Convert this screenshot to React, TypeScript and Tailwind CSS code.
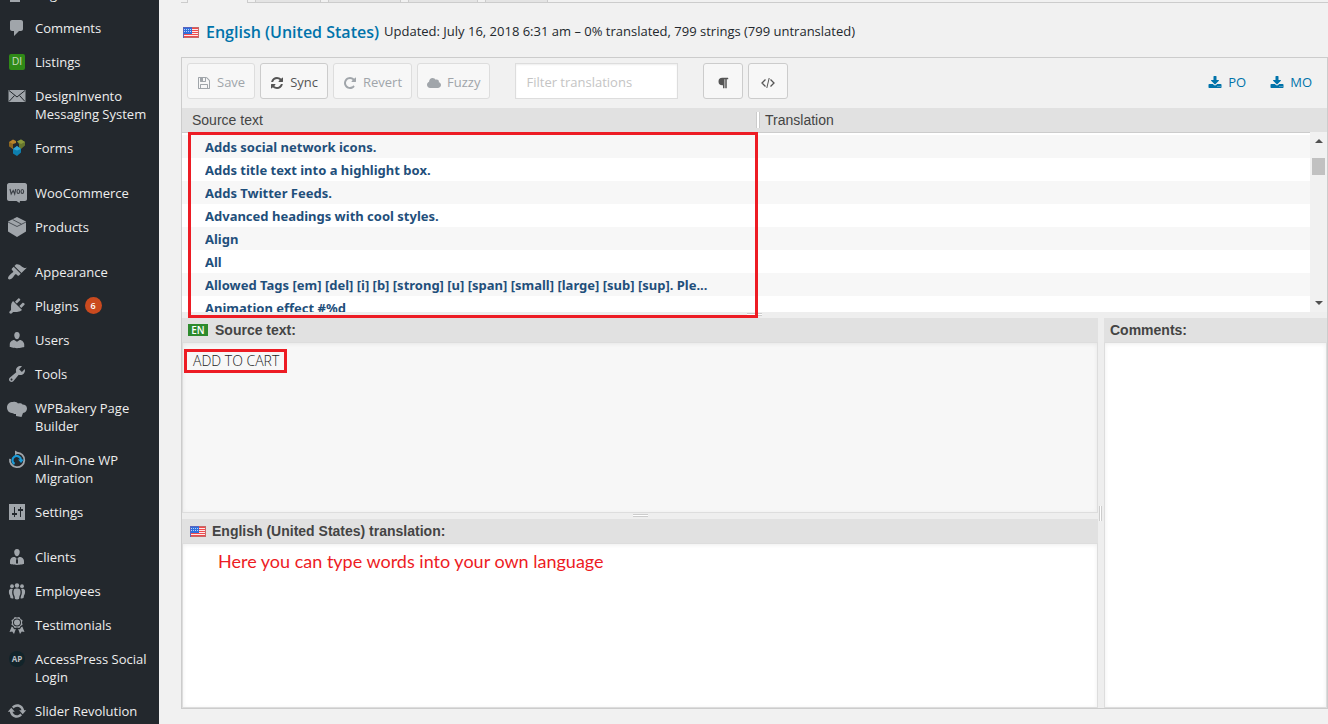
import type { ReactNode } from "react";
import { FaCloud, FaParagraph } from "react-icons/fa";

type MenuItem = {
  label: string;
  icon: ReactNode;
  count?: number;
  gap?: boolean;
};

function Dash({ d }: { d: string }) {
  return (
    <svg viewBox="0 0 20 20" className="size-5 fill-[#a0a5aa]" fillRule="evenodd" aria-hidden="true">
      <path d={d} />
    </svg>
  );
}

function Awesome({ d }: { d: string }) {
  return (
    <svg viewBox="0 0 1792 1792" className="size-[14px] fill-current" aria-hidden="true">
      <path d={d} />
    </svg>
  );
}

const savePath =
  "M512 1536h768v-384h-768v384zm896 0h128v-896q0-14-10-38.5t-20-34.5l-281-281q-10-10-34-20t-39-10v416q0 40-28 68t-68 28h-576q-40 0-68-28t-28-68v-416h-128v1280h128v-416q0-40 28-68t68-28h832q40 0 68 28t28 68v416zm-384-928v-320q0-13-9.5-22.5t-22.5-9.5h-192q-13 0-22.5 9.5t-9.5 22.5v320q0 13 9.5 22.5t22.5 9.5h192q13 0 22.5-9.5t9.5-22.5zm640 32v928q0 40-28 68t-68 28h-1344q-40 0-68-28t-28-68v-1344q0-40 28-68t68-28h928q40 0 88 20t76 48l280 280q28 28 48 76t20 88z";
const syncPath =
  "M1639 1056q0 5-1 7-64 268-268 434.5t-478 166.5q-146 0-282.5-55t-243.5-157l-129 129q-19 19-45 19t-45-19-19-45v-448q0-26 19-45t45-19h448q26 0 45 19t19 45-19 45l-137 137q71 66 161 102t187 36q134 0 250-65t186-179q11-17 53-117 8-23 30-23h192q13 0 22.5 9.5t9.5 22.5zm25-800v448q0 26-19 45t-45 19h-448q-26 0-45-19t-19-45 19-45l138-138q-148-137-349-137-134 0-250 65t-186 179q-11 17-53 117-8 23-30 23h-199q-13 0-22.5-9.5t-9.5-22.5v-7q65-268 270-434.5t480-166.5q146 0 284 55.5t245 156.5l130-129q19-19 45-19t45 19 19 45z";
const revertPath =
  "M1664 256v448q0 26-19 45t-45 19h-448q-42 0-59-40-17-39 14-69l138-138q-148-137-349-137-104 0-198.5 40.5t-163.5 109.5-109.5 163.5-40.5 198.5 40.5 198.5 109.5 163.5 163.5 109.5 198.5 40.5q119 0 225-52t179-147q7-10 23-12 15 0 25 9l137 138q9 8 9.5 20.5t-7.5 22.5q-109 132-264 204.5t-327 72.5q-156 0-298-61t-245-164-164-245-61-298 61-298 164-245 245-164 298-61q147 0 284.5 55.5t244.5 156.5l130-129q29-31 70-14 39 17 39 59z";
const downloadPath =
  "M1344 1344q0-26-19-45t-45-19-45 19-19 45 19 45 45 19 45-19 19-45zm256 0q0-26-19-45t-45-19-45 19-19 45 19 45 45 19 45-19 19-45zm128-224v320q0 40-28 68t-68 28h-1472q-40 0-68-28t-28-68v-320q0-40 28-68t68-28h465l135 136q58 56 136 56t136-56l136-136h464q40 0 68 28t28 68zm-325-569q17 41-14 70l-448 448q-18 19-45 19t-45-19l-448-448q-31-29-14-70 17-39 59-39h256v-448q0-26 19-45t45-19h256q26 0 45 19t19 45v448h256q42 0 59 39z";

function Flag() {
  return (
    <svg viewBox="0 0 16 11" className="h-[11px] w-4 shrink-0" shapeRendering="crispEdges" aria-hidden="true">
      <rect width="16" height="11" fill="#fbeaea" />
      {[1, 3, 5, 7, 9].map((y) => (
        <rect key={y} y={y} width="16" height="1" fill="#ef4a4d" />
      ))}
      <rect width="9" height="7" fill="#2f6fdd" />
      {[2, 4].map((y) => (
        <path key={y} d={`M1 ${y}h1v1h-1zM3 ${y}h1v1h-1zM5 ${y}h1v1h-1zM7 ${y}h1v1h-1z`} fill="#b9cff7" />
      ))}
      <path d="M0 0h9v1H1v10H0z" fill="#5a63bd" />
      <path d="M9 0h7v11H1v-1h14V1H9z" fill="#c46a68" />
    </svg>
  );
}

const menu: MenuItem[] = [
  {
    label: "Pages",
    icon: <Dash d="M6 15V2h10v13H6zm-1 1h8v2H3V5h2v11z" />,
  },
  {
    label: "Comments",
    icon: <Dash d="M5 2h9c1.1 0 2 .9 2 2v7c0 1.1-.9 2-2 2h-2l-5 5v-5H5c-1.1 0-2-.9-2-2V4c0-1.1.9-2 2-2z" />,
  },
  {
    label: "Listings",
    icon: (
      <span className="flex size-4 items-center justify-center rounded-xs bg-[#2f8a17] font-['Liberation_Sans',sans-serif] text-[10px] text-[#c5d9bd]">
        DI
      </span>
    ),
  },
  {
    label: "DesignInvento Messaging System",
    icon: (
      <svg viewBox="0 0 20 20" className="size-5" aria-hidden="true">
        <rect x="1.5" y="4" width="17" height="12" fill="#a0a5aa" />
        <path d="M2 4.500l8 6.500 8-6.500M2 15.500l5.500-6M18 15.500l-5.500-6" fill="none" stroke="#23282d" />
      </svg>
    ),
  },
  {
    label: "Forms",
    icon: (
      <svg viewBox="0 0 20 20" className="size-5" aria-hidden="true">
        <path d="M2 4l4-2.500L9 3v2L6 6v5l-4-3z" fill="#b9842a" />
        <path d="M2 4l4 2v5L2 8z" fill="#8c651f" />
        <path d="M10 3.500l4-2L18 4v3.500L14 11l-2-1V6z" fill="#66762d" />
        <path d="M10 3.500l4-2L18 4l-4 2z" fill="#89983a" />
        <path d="M6 11l4-3 4 3v3.500L10 18l-4-2.500z" fill="#0e7fae" />
        <path d="M6 11l4-3 4 3-4 1.500z" fill="#36a6d3" />
      </svg>
    ),
  },
  {
    label: "WooCommerce",
    gap: true,
    icon: (
      <svg viewBox="0 0 20 20" className="size-5" aria-hidden="true">
        <path d="M2 0h16c1 0 2 1 2 2v14c0 1-1 2-2 2h-5l-.500 2-3-2H2c-1 0-2-1-2-2V2c0-1 1-2 2-2z" fill="#a0a5aa" />
        <path d="M3 6l1.200 5 2-3.500 1.500 3.500 1-5" fill="none" stroke="#3b4046" strokeWidth="1.200" />
        <ellipse cx="11.300" cy="8.500" rx="1.300" ry="2" fill="none" stroke="#3b4046" strokeWidth="1.100" />
        <ellipse cx="15.300" cy="8.500" rx="1.300" ry="2" fill="none" stroke="#3b4046" strokeWidth="1.100" />
      </svg>
    ),
  },
  {
    label: "Products",
    icon: (
      <svg viewBox="0 0 20 20" className="size-5" aria-hidden="true">
        <path d="M10 0l9 4.500v10L10 20l-9-5.500v-10z" fill="#a0a5aa" />
        <path d="M1 5l9 4.500L19 5M5.500 2.500l9 4.700" fill="none" stroke="#4b5056" />
      </svg>
    ),
  },
  {
    label: "Appearance",
    gap: true,
    icon: (
      <Dash d="M14.480 11.060L7.410 3.990l1.500-1.500c.5-.56 2.300-.47 3.510.32 1.210.8 1.430 1.280 2.910 2.100 1.180.64 2.450 1.260 4.450.85zm-.71.71L6.700 4.700 4.930 6.470c-.39.39-.39 1.020 0 1.410l1.060 1.060c.39.39.39 1.030 0 1.420-.6.6-1.430 1.110-2.210 1.690-.35.26-.7.53-1.010.84C1.430 14.230.4 16.080 1.400 17.070c.99 1 2.840-.03 4.180-1.360.31-.31.58-.66.85-1.020.57-.78 1.080-1.610 1.690-2.210.39-.39 1.020-.39 1.410 0l1.060 1.060c.39.39 1.020.39 1.410 0z" />
    ),
  },
  {
    label: "Plugins",
    count: 6,
    icon: (
      <Dash d="M13.110 4.360L9.870 7.600 8 5.730l3.240-3.240c.35-.34 1.050-.2 1.560.32.52.51.66 1.210.31 1.550zm-8 1.770l.91-1.120 9.010 9.010-1.190.84c-.71.71-2.630 1.160-3.820 1.160H6.140L4.900 17.260c-.59.59-1.540.59-2.120 0-.59-.58-.59-1.530 0-2.120l1.240-1.240v-3.880c0-1.130.4-3.190 1.090-3.890zm7.260 3.970l3.240-3.240c.34-.35 1.040-.21 1.550.31.52.51.66 1.210.31 1.550l-3.240 3.250z" />
    ),
  },
  {
    label: "Users",
    icon: (
      <Dash d="M10 9.250c-2.270 0-2.730-3.440-2.730-3.440C7 4.020 7.820 2 9.970 2c2.160 0 2.980 2.020 2.710 3.810 0 0-.41 3.440-2.680 3.440zm0 2.570L12.720 10c2.390 0 4.520 2.330 4.520 4.530v2.490s-3.650 1.130-7.240 1.130c-3.650 0-7.240-1.130-7.240-1.130v-2.490c0-2.250 1.940-4.480 4.470-4.480z" />
    ),
  },
  {
    label: "Tools",
    icon: (
      <Dash d="M16.680 9.770c-1.340 1.340-3.300 1.670-4.950.99l-5.410 6.520c-.99.99-2.590.99-3.580 0s-.99-2.590 0-3.570l6.520-5.420c-.68-1.650-.35-3.610.99-4.950 1.280-1.280 3.120-1.620 4.720-1.060l-2.890 2.890 2.820 2.820 2.860-2.870c.53 1.580.18 3.390-1.080 4.650zM3.810 16.210c.4.39 1.040.39 1.430 0 .4-.4.4-1.040 0-1.430-.39-.4-1.030-.4-1.430 0-.39.39-.39 1.030 0 1.430z" />
    ),
  },
  {
    label: "WPBakery Page Builder",
    icon: (
      <svg viewBox="0 0 20 20" className="size-5 fill-[#a0a5aa]" aria-hidden="true">
        <path d="M6 4c2-.8 4 0 5 1.500 2-.5 4 0 4.500 1 2.500 0 4.500 1.500 4.500 4 0 2.300-1.500 4-4 4.500L14.500 19l-5.500-1V16c-1 .2-2 0-3-.8C2.500 15.200 0 13 0 9.500S2.500 4 6 4z" />
      </svg>
    ),
  },
  {
    label: "All-in-One WP Migration",
    icon: (
      <svg viewBox="0 0 20 20" className="size-5" fill="none" strokeWidth="1.800" aria-hidden="true">
        <path d="M10 2.800a7.200 7.200 0 1 1-7 6" stroke="#a0a5aa" />
        <path d="M8 .500l4 2.300-4 2.400z" fill="#a0a5aa" />
        <path d="M7.500 14a4.300 4.300 0 1 1 6.500-4" stroke="#1a9ad7" strokeWidth="2.200" />
        <path d="M11 9.500h6l-3 3.500z" fill="#1a9ad7" />
      </svg>
    ),
  },
  {
    label: "Settings",
    icon: (
      <Dash d="M18 18V2H2v16h16zM8 11h2v2H8v2H7v-2H5v-2h2V5h1v6zm5-2h-2V7h2V5h1v2h2v2h-2v6h-1V9z" />
    ),
  },
  {
    label: "Clients",
    gap: true,
    icon: (
      <Dash d="M7.300 6c-.5-2.300.6-4.100 2.640-4.100 2.300 0 3.200 2 2.700 4.100-.4 2-1.300 3.200-2.700 3.200S7.600 7.900 7.300 6zm9.200 6.240c.41.7.5 1.410.5 2.140v2.490c0 .3-3.500 1.130-7 1.130s-7-.83-7-1.130v-2.490c0-.75.07-1.460.46-2.150s.81-1.250 1.500-1.680C5.660 10.120 7.190 10 8 10l1.670 1.670L9 13v3l1.020 1.080L11 16v-3l-.68-1.330L11.970 10c.77 0 2.200.07 2.900.52.71.45 1.210 1.020 1.630 1.720z" />
    ),
  },
  {
    label: "Employees",
    icon: (
      <svg viewBox="0 0 20 20" className="size-5 fill-[#a0a5aa]" aria-hidden="true">
        <circle cx="10" cy="4.500" r="2.200" />
        <circle cx="5" cy="5.200" r="1.900" />
        <circle cx="15" cy="5.200" r="1.900" />
        <path d="M7 8.500c1-1.200 5-1.200 6 0 1 2 .5 5-.5 6.500l-.5 3c-1 .5-3 .5-4 0l-.5-3c-1-1.500-1.500-4.500-.5-6.500z" />
        <path d="M5.800 8C4 7.500 2.500 8 2 9.500c-.3 2 .2 4 1 5l.5 2.500c1 .5 2 .5 3 .2L6 15c-1-2-1.200-4.500-.2-7zM14.200 8c1.800-.5 3.300 0 3.800 1.500.3 2-.2 4-1 5l-.5 2.500c-1 .5-2 .5-3 .2L14 15c1-2 1.200-4.500.2-7z" />
      </svg>
    ),
  },
  {
    label: "Testimonials",
    icon: (
      <Dash d="M4.460 5.160L5 7.460l-.54 2.290 2.010 1.240L7.700 13l2.300-.54 2.300.54 1.230-2.010 2.010-1.240L15 7.460l.54-2.300-2-1.240-1.240-2.010-2.300.55-2.290-.54-1.250 2zM10 11.500a4 4 0 1 1 0-8 4 4 0 0 1 0 8zm0-1a3 3 0 1 0 0-6 3 3 0 0 0 0 6zM4.700 11.500L2.500 17l2.700-.4L7 19l1.800-5-1.700.2-1.200-2zm10.600 0l2.200 5.500-2.700-.4L13 19l-1.800-5 1.700.2 1.200-2z" />
    ),
  },
  {
    label: "AccessPress Social Login",
    icon: (
      <span className="flex size-4 items-center justify-center rounded-full bg-[#12242a] text-[8px] font-bold text-[#b9bec2]">AP</span>
    ),
  },
  {
    label: "Slider Revolution",
    icon: (
      <Dash d="M10.200 3.280c3.530 0 6.430 2.610 6.920 6h2.080l-3.500 4-3.500-4h2.320c-.45-1.970-2.210-3.450-4.320-3.450-1.450 0-2.730.71-3.540 1.780L4.950 5.660C6.230 4.200 8.110 3.280 10.200 3.280zm-.4 13.440c-3.520 0-6.430-2.610-6.920-6H.8l3.500-4c1.170 1.330 2.330 2.670 3.500 4H5.480c.45 1.970 2.210 3.450 4.320 3.450 1.450 0 2.730-.71 3.540-1.780l1.710 1.950c-1.280 1.460-3.150 2.380-5.250 2.380z" />
    ),
  },
];

const strings = [
  "Adds social network icons.",
  "Adds title text into a highlight box.",
  "Adds Twitter Feeds.",
  "Advanced headings with cool styles.",
  "Align",
  "All",
  "Allowed Tags [em] [del] [i] [b] [strong] [u] [span] [small] [large] [sub] [sup]. Ple...",
  "Animation effect #%d",
];

function Sidebar() {
  return (
    <nav aria-label="Admin menu" className="h-screen w-[159px] shrink-0 overflow-hidden bg-[#23282d]">
      <ul className="-mt-[23px]">
        {menu.map((item) => (
          <li key={item.label} className={item.gap ? "mt-[11px]" : ""}>
            <a href="#" className="flex py-2 text-[13px] leading-[18px] text-[#eee]">
              <span className="flex h-[18px] w-[35px] shrink-0 items-center justify-center pr-px">{item.icon}</span>
              <span>{item.label}</span>
              {item.count && (
                <span className="ml-[6px] flex size-[17px] items-center justify-center rounded-full bg-[#ca4a1f] text-[9px] font-semibold text-white">
                  {item.count}
                </span>
              )}
            </a>
          </li>
        ))}
      </ul>
    </nav>
  );
}

function Tabs() {
  return (
    <div className="flex h-[3px] shrink-0 gap-[7px] border-b border-[#ccc] pl-[6px]">
      <span className="h-[3px] w-[61px] border-x border-[#ccc] bg-[#f1f1f1]" />
      <span className="w-[66px] border-x border-[#ccc] bg-[#e4e4e4]" />
      <span className="w-[73px] border-x border-[#ccc] bg-[#e4e4e4]" />
      <span className="w-[70px] border-x border-[#ccc] bg-[#e4e4e4]" />
      <span className="w-[63px] border-x border-[#ccc] bg-[#e4e4e4]" />
    </div>
  );
}

function ToolButton({ children, disabled, label }: { children: ReactNode; disabled?: boolean; label?: string }) {
  return (
    <button
      type="button"
      disabled={disabled}
      aria-label={label}
      className="flex h-9 min-w-10 items-center justify-center gap-[6px] rounded-[3px] border border-[#ccc] bg-[#f7f7f7] px-[9px] pt-[3px] text-[13px] text-[#555] disabled:border-[#ddd] disabled:text-[#a0a5aa]"
    >
      {children}
    </button>
  );
}

function Toolbar() {
  return (
    <div className="flex h-[50px] shrink-0 items-center gap-[5px] px-[5px] pb-1">
      <ToolButton disabled>
        <Awesome d={savePath} />
        Save
      </ToolButton>
      <ToolButton>
        <Awesome d={syncPath} />
        Sync
      </ToolButton>
      <ToolButton disabled>
        <Awesome d={revertPath} />
        Revert
      </ToolButton>
      <ToolButton disabled>
        <FaCloud className="size-[14px]" />
        Fuzzy
      </ToolButton>
      <input
        type="text"
        aria-label="Filter translations"
        placeholder="Filter translations"
        className="mx-5 h-9 w-[163px] border border-[#ddd] bg-white px-[10px] pt-[2px] text-[13px] shadow-[inset_0_1px_2px_rgba(0,0,0,0.07)] outline-none placeholder:text-[#c4c4c4]"
      />
      <ToolButton label="Toggle invisibles">
        <FaParagraph className="size-3" />
      </ToolButton>
      <ToolButton label="Toggle code view">
        <svg viewBox="0 0 14 12" className="h-3 w-[14px]" fill="none" stroke="currentColor" aria-hidden="true">
          <path d="M4.500 2.500L1 6l3.500 3.500M9.500 2.500L13 6l-3.500 3.500" strokeWidth="1.300" />
          <path d="M8.200 1L5.800 11" />
        </svg>
      </ToolButton>
      <div className="ml-auto flex gap-6 pt-[3px] pr-[10px] text-[13px] text-[#0073aa]">
        <a href="#" className="flex items-center gap-[6px]">
          <Awesome d={downloadPath} />
          PO
        </a>
        <a href="#" className="flex items-center gap-[6px]">
          <Awesome d={downloadPath} />
          MO
        </a>
      </div>
    </div>
  );
}

function StringList() {
  return (
    <div className="relative shrink-0">
      <div className="h-[204px] overflow-hidden bg-white">
        <table className="w-full table-fixed border-collapse text-left">
          <thead className="bg-[#e1e1e1] font-['Liberation_Sans',sans-serif] text-sm text-[#444]">
            <tr className="h-6 border-b border-[#ccc]">
              <th className="w-[578px] pl-[10px] font-normal">
                <div className="flex items-center justify-between">
                  Source text
                  <span className="h-4 w-1 border-x border-x-[#ccc] bg-white" />
                </div>
              </th>
              <th className="pl-[5px] font-normal">Translation</th>
            </tr>
          </thead>
          <tbody>
            <tr className="h-[3px]">
              <td colSpan={2} />
            </tr>
            {strings.map((text) => (
              <tr key={text} className="h-[23px] even:bg-[#f7f7f7]">
                <td className="pt-[2px] pr-[10px] pl-[23px]">
                  <div className="truncate font-['Noto_Sans',sans-serif] text-[13px] leading-[21px] font-bold text-[#1f4f7b]">
                    {text}
                  </div>
                </td>
                <td />
              </tr>
            ))}
          </tbody>
        </table>
      </div>
      <div className="absolute top-6 right-0 bottom-0 flex w-[17px] flex-col items-center bg-[#f1f1f1] py-[7px]">
        <span className="border-x-4 border-b-4 border-x-transparent border-b-[#505050]" />
        <span className="mt-[15px] h-[17px] w-[13px] bg-[#c1c1c1]" />
        <span className="mt-auto border-x-4 border-t-4 border-x-transparent border-t-[#505050]" />
      </div>
      <div className="pointer-events-none absolute top-6 -bottom-[6px] left-[6px] z-10 w-[570px] border-3 border-[#ed1c24]" />
    </div>
  );
}

function RowSplitter() {
  return (
    <div className="flex h-[6px] shrink-0 items-start justify-center bg-[#eee] pt-px">
      <span className="h-[3px] w-[15px] border-y border-[#ccc] bg-white" />
    </div>
  );
}

const paneHead = "flex h-6 shrink-0 items-center bg-[#e1e1e1] px-[6px] font-['Liberation_Sans',sans-serif] text-sm font-bold text-[#444]";
const paneText =
  "block w-full flex-1 resize-none border border-[#ddd] px-[10px] py-2 text-sm shadow-[inset_0_1px_4px_rgba(0,0,0,0.07)] outline-none";

function Editor() {
  return (
    <div className="flex min-h-0 flex-1">
      <div className="flex min-w-0 flex-1 flex-col">
        <div className="relative flex h-[195px] flex-col">
          <label htmlFor="source" className={`${paneHead} gap-[7px]`}>
            <span className="flex h-3 w-5 items-center justify-center bg-[#2d8a2d] font-['Open_Sans',sans-serif] text-[10px] font-semibold text-white">
              EN
            </span>
            Source text:
          </label>
          <textarea id="source" readOnly defaultValue="ADD TO CART" className={`${paneText} bg-[#f7f7f7] font-light text-[#222]`} />
          <div className="pointer-events-none absolute top-[31px] left-[2px] h-6 w-[103px] border-3 border-[#ed1c24]" />
        </div>
        <RowSplitter />
        <div className="flex flex-1 flex-col">
          <label htmlFor="translation" className={`${paneHead} gap-[6px] pl-2`}>
            <Flag />
            English (United States) translation:
          </label>
          <textarea
            id="translation"
            defaultValue="Here you can type words into your own language"
            className="block w-full flex-1 resize-none border border-[#ddd] bg-white px-[35px] py-[6px] font-['Lato',sans-serif] text-lg leading-[22px] text-[#ed1c24] shadow-[inset_0_1px_4px_rgba(0,0,0,0.07)] outline-none"
          />
        </div>
      </div>
      <div className="flex w-[6px] items-center bg-[#eee] pl-px">
        <span className="h-[15px] w-[3px] border-x border-[#ccc] bg-white" />
      </div>
      <div className="flex w-[223px] flex-col">
        <label htmlFor="comments" className={paneHead}>
          Comments:
        </label>
        <textarea id="comments" className={`${paneText} bg-white`} />
      </div>
    </div>
  );
}

export default function App() {
  return (
    <div className="flex h-screen overflow-hidden bg-[#f1f1f1] font-['Open_Sans',sans-serif]">
      <Sidebar />
      <main className="flex min-w-0 flex-1 flex-col pb-[15px] pl-[22px]">
        <Tabs />
        <div className="flex h-[54px] shrink-0 items-center gap-[7px] pt-1 pl-[2px]">
          <Flag />
          <h1 className="flex items-center gap-[5px] text-[13px] text-[#23282d]">
            <a href="#" className="text-base font-semibold text-[#0073aa]">
              English (United States)
            </a>
            Updated: July 16, 2018 6:31 am – 0% translated, 799 strings (799 untranslated)
          </h1>
        </div>
        <section className="flex min-h-0 flex-1 flex-col border border-[#ccc]">
          <Toolbar />
          <StringList />
          <RowSplitter />
          <Editor />
        </section>
      </main>
    </div>
  );
}
